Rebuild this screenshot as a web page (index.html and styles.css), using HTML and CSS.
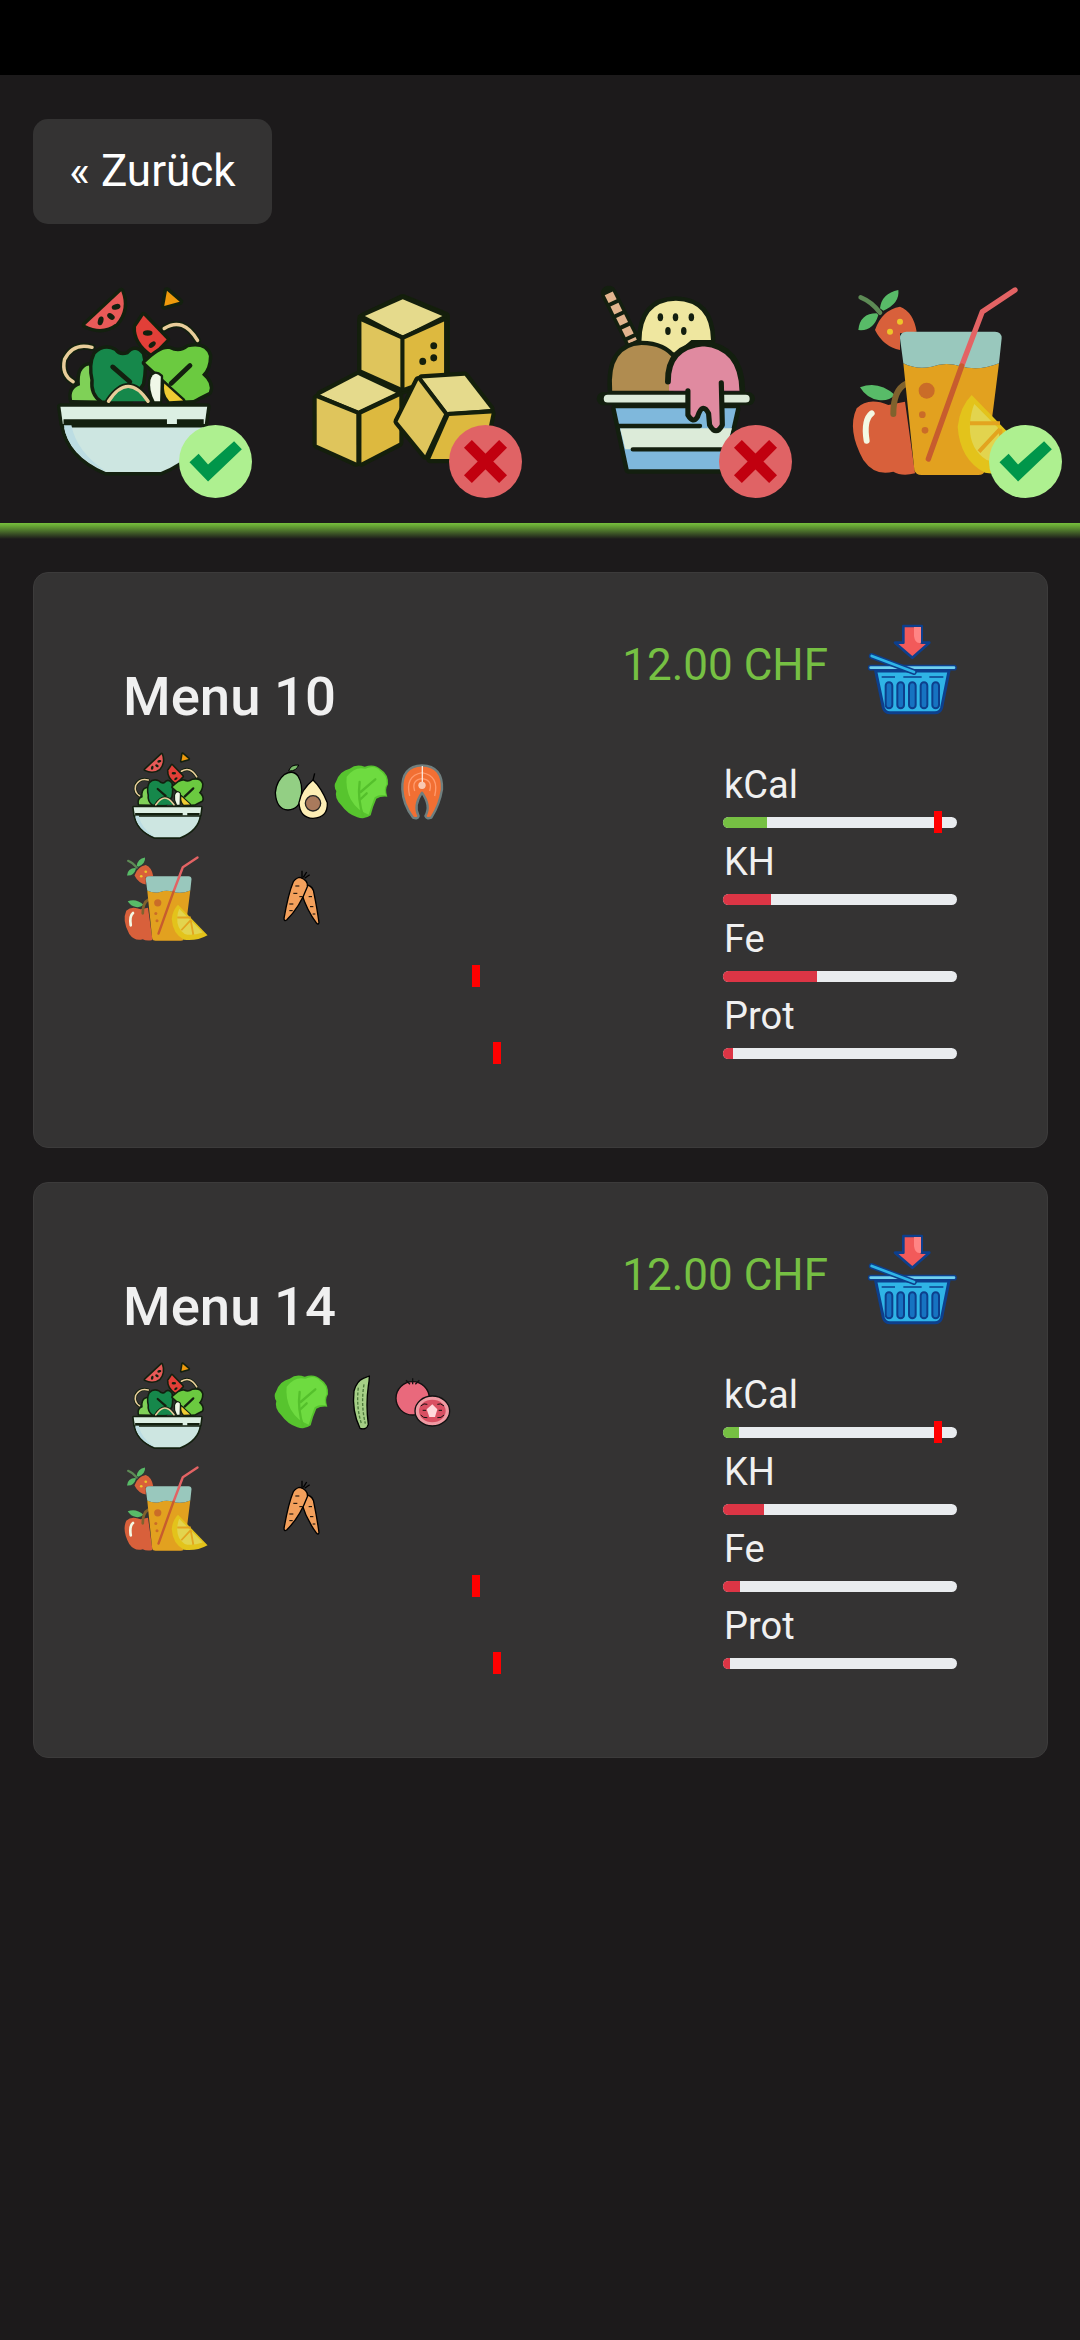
FILE: index.html
```html
<!DOCTYPE html>
<html lang="de">
<head>
    <meta charset="UTF-8">
    <title>Menu</title>
    <link rel="stylesheet" href="styles.css">
</head>
<body>
<svg class="defs" width="0" height="0">
    <defs>
        <symbol id="i-salad" viewBox="-36 9 582 582">
            <g stroke="#13200f" stroke-width="20" stroke-linejoin="round" stroke-linecap="round" paint-order="stroke">
                <path d="M110 140 L215 42 Q235 95 200 135 Q160 165 110 140Z" fill="#e85a58"/>
                <path d="M348 40 L385 72 L340 85Z" fill="#ee9a0c"/>
                <path d="M280 112 L347 182 L305 225 Q255 190 258 145Z" fill="#e23f38"/>
                <path d="M340 150 Q395 115 437 185" fill="none"/>
                <path d="M130 205 Q75 190 50 240 Q40 285 75 305" fill="none"/>
                <path d="M72 358 Q65 325 95 315 Q90 265 120 258 Q150 290 160 360Z" fill="#7fd157"/>
                <path d="M135 300 Q125 255 140 225 Q165 200 195 215 Q210 235 235 225 Q255 200 275 225 Q285 260 275 310 L240 360 H160 Q130 340 135 300Z" fill="#16884b"/>
                <path d="M285 250 Q330 205 355 210 Q385 225 410 205 Q460 195 470 230 Q470 265 450 285 Q480 310 470 335 Q440 350 425 358 L395 360 L340 300Z" fill="#6bca40"/>
                <path d="M190 262 L240 305 M415 258 L360 310" fill="none" stroke-width="14"/>
                <path d="M300 300 Q310 270 330 290 L328 362 L312 362 Q295 330 300 300Z" fill="#f0f8e8" stroke-width="14"/>
                <path d="M340 310 L395 360 L355 362 Q335 340 340 310Z" fill="#eecb33" stroke-width="14"/>
                <path d="M178 362 Q235 275 293 362" fill="#16884b"/>
                <path d="M47 430 H455 Q445 520 330 568 H170 Q60 520 47 430Z" fill="#cde6e1"/>
                <path d="M38 378 H465 L458 428 H45Z" fill="#dcefe3"/>
            </g>
            <g fill="none" stroke-linecap="round">
                <path d="M340 150 Q395 115 437 185 M130 205 Q75 190 50 240 Q40 285 75 305 M178 362 Q235 275 293 362" stroke="#e8cd9a" stroke-width="10"/>
                <path d="M47 422 H348 M377 422 H455" stroke="#13200f" stroke-width="15" stroke-linecap="butt"/>
            </g>
            <path d="M48 432 H70 Q85 510 170 566 Q60 520 48 432Z" fill="#bcdde3"/>
            <g fill="#13200f">
                <ellipse cx="200" cy="87" rx="13" ry="8" transform="rotate(-15 200 87)"/>
                <ellipse cx="185" cy="115" rx="12" ry="8" transform="rotate(35 185 115)"/>
                <ellipse cx="155" cy="128" rx="8" ry="13" transform="rotate(15 155 128)"/>
                <ellipse cx="292" cy="163" rx="14" ry="8"/>
                <ellipse cx="305" cy="197" rx="12" ry="7" transform="rotate(-40 305 197)"/>
            </g>
        </symbol>

        <symbol id="i-juice" viewBox="0 0 600 600">
            <path d="M90 150 Q110 90 165 80 Q205 95 215 155 L165 160 L165 210 Q115 200 90 150Z" fill="#d8603b"/>
            <circle cx="165" cy="125" r="9" fill="#edc52a"/>
            <circle cx="135" cy="155" r="9" fill="#edc52a"/>
            <path d="M105 85 Q110 40 160 30 Q165 70 115 92Z M95 100 Q45 100 40 150 Q85 155 100 105Z" fill="#58bb68"/>
            <path d="M47 52 Q80 65 105 98" fill="none" stroke="#5d8a55" stroke-width="14" stroke-linecap="round"/>
            <path d="M130 375 Q70 350 35 385 Q5 450 55 540 Q90 590 145 575 Q170 590 210 580 L180 365Z" fill="#d8603b"/>
            <path d="M80 400 Q55 420 65 482" fill="none" stroke="#f3f8e3" stroke-width="18" stroke-linecap="round"/>
            <path d="M45 322 Q100 300 150 345 Q130 365 100 360 Q65 355 45 322Z" fill="#58bb68"/>
            <path d="M145 402 Q145 330 182 312" fill="none" stroke="#80622d" stroke-width="18" stroke-linecap="round"/>
            <path d="M175 250 Q215 270 260 260 Q300 245 345 258 Q400 275 462 250 L445 385 L420 570 Q418 585 400 585 H230 Q212 585 208 570Z" fill="#e2a11f"/>
            <path d="M165 175 Q165 155 185 155 H450 Q470 155 470 175 L462 250 Q400 275 345 258 Q300 245 260 260 Q215 270 175 250Z" fill="#99c8bd"/>
            <circle cx="245" cy="332" r="24" fill="#ca6c28"/>
            <circle cx="232" cy="404" r="10" fill="#ca6c28"/>
            <circle cx="240" cy="451" r="10" fill="#ca6c28"/>
            <path d="M510 30 L412 95 L350 258" fill="none" stroke="#e36364" stroke-width="16" stroke-linecap="round" stroke-linejoin="round"/>
            <path d="M350 258 L250 537" fill="none" stroke="#c75c2e" stroke-width="16" stroke-linecap="round"/>
            <path d="M380 345 L577 548 Q500 590 420 578 Q345 540 338 440 Q345 380 380 345Z" fill="#e3c31b"/>
            <path d="M388 372 L545 530 Q470 555 425 540 Q370 505 375 430 Q378 395 388 372Z" fill="#e2d44e"/>
            <path d="M375 430 H465 M402 515 L465 447 M465 447 L482 545" fill="none" stroke="#e3a41f" stroke-width="12"/>
        </symbol>

        <symbol id="i-tofu" viewBox="886 784 581 560" preserveAspectRatio="none">
            <g stroke="#141f0c" stroke-width="24" stroke-linejoin="round" paint-order="stroke">
                <path d="M1050 890 L1170 835 L1295 885 L1295 1045 L1165 1095 L1050 1035Z" fill="#141f0c"/>
                <path d="M1060 885 L1170 838 L1285 885 L1170 940Z" fill="#e5da8c"/>
                <path d="M1050 900 L1165 950 L1165 1085 L1050 1035Z" fill="#dfc55c"/>
                <path d="M1175 950 L1290 900 L1290 1045 L1175 1085Z" fill="#ddb93f"/>
                <path d="M930 1105 L1040 1050 L1150 1100 L1040 1150Z" fill="#e5da8c"/>
                <path d="M920 1115 L1035 1160 L1035 1295 L920 1245Z" fill="#dfc55c"/>
                <path d="M1050 1160 L1160 1110 L1160 1240 L1050 1295Z" fill="#ddb93f"/>
                <path d="M1225 1060 L1350 1052 L1425 1145 L1300 1155Z" fill="#e5da8c"/>
                <path d="M1305 1165 L1428 1158 L1400 1285 L1250 1285Z" fill="#ddb93f"/>
                <path d="M1215 1065 L1290 1160 L1235 1275 L1155 1180Z" fill="#dfc55c"/>
            </g>
            <g fill="#141f0c">
                <circle cx="1260" cy="968" r="10"/>
                <circle cx="1260" cy="1002" r="10"/>
                <circle cx="1228" cy="1012" r="10"/>
            </g>
        </symbol>

        <symbol id="i-icecream" viewBox="102 60 581 600" preserveAspectRatio="none">
            <path d="M200 100 L270 245" stroke="#131f0f" stroke-width="46" stroke-linecap="round"/>
            <path d="M200 100 L270 245" stroke="#e2b48e" stroke-width="26" stroke-dasharray="26 12"/>
            <g stroke="#131f0f" stroke-width="26" stroke-linejoin="round" paint-order="stroke">
                <path d="M295 245 Q295 125 395 122 Q495 125 497 240 L440 240 L395 280Z" fill="#efe7a0"/>
                <path d="M210 392 Q200 260 295 255 Q360 255 390 300 L375 392Z" fill="#b08c50"/>
                <path d="M220 445 H570 L530 628 H258Z" fill="#7fb8dc"/>
            </g>
            <path d="M233 505 H558 L540 568 H248Z" fill="#dcebd9"/>
            <path d="M228 498 H465 M270 568 H530" stroke="#131f0f" stroke-width="13" stroke-linecap="round"/>
            <path d="M185 416 H605" stroke="#131f0f" stroke-width="40" stroke-linecap="round"/>
            <path d="M197 416 H598" stroke="#dcebd9" stroke-width="23" stroke-linecap="round"/>
            <path d="M375 392 Q370 260 475 255 Q580 265 582 392 L532 392 L530 490 Q512 530 495 490 L493 460 Q470 420 455 470 Q445 490 430 470 L430 392Z" fill="#e08aa0"/>
            <path d="M372 365 Q370 260 475 250 Q585 260 588 390" fill="none" stroke="#131f0f" stroke-width="17" stroke-linecap="round"/>
            <path d="M430 392 L430 465 Q445 492 458 470 Q472 425 490 460 L493 495 Q512 530 530 495 L527 368" fill="none" stroke="#131f0f" stroke-width="15" stroke-linecap="round" stroke-linejoin="round"/>
            <g fill="#131f0f">
                <ellipse cx="350" cy="172" rx="8" ry="12"/>
                <ellipse cx="394" cy="172" rx="8" ry="12"/>
                <ellipse cx="440" cy="172" rx="8" ry="12"/>
                <ellipse cx="372" cy="213" rx="8" ry="12"/>
                <ellipse cx="418" cy="213" rx="8" ry="12"/>
            </g>
        </symbol>

        <symbol id="i-basket" viewBox="81 30 270 285">
            <path d="M190 45 H245 V95 H268 L217 140 L165 95 H190Z" fill="#f25a5a" stroke="#0d3f8c" stroke-width="8" stroke-linejoin="round"/>
            <path d="M222 48 H243 V95 Q225 100 222 75Z" fill="#ff8585"/>
            <path d="M107 180 H327 L305 290 Q300 305 285 305 H150 Q135 305 130 290Z" fill="#2fb4e6" stroke="#0d3f8c" stroke-width="9" stroke-linejoin="round"/>
            <g fill="#1673c1" stroke="#0d3f8c" stroke-width="6">
                <rect x="137" y="214" width="20" height="78" rx="10"/>
                <rect x="172" y="214" width="20" height="78" rx="10"/>
                <rect x="207" y="214" width="20" height="78" rx="10"/>
                <rect x="242" y="214" width="20" height="78" rx="10"/>
                <rect x="277" y="214" width="20" height="78" rx="10"/>
            </g>
            <path d="M125 198 H165 M190 198 H245 M268 198 H310" stroke="#0d3f8c" stroke-width="5"/>
            <path d="M92 170 H342" stroke="#0d3f8c" stroke-width="17" stroke-linecap="round"/>
            <path d="M92 170 H342" stroke="#6fd0ee" stroke-width="8" stroke-linecap="round"/>
            <path d="M95 135 L222 183" stroke="#0d3f8c" stroke-width="17" stroke-linecap="round"/>
            <path d="M95 135 L222 183" stroke="#2fb4e6" stroke-width="8" stroke-linecap="round"/>
        </symbol>

        <symbol id="i-avocado" viewBox="12 15 180 180">
            <path d="M50 55 Q75 40 90 60 Q105 85 100 120 Q95 160 60 162 Q25 160 22 110 Q25 75 50 55Z" fill="#93cf84" stroke="#000" stroke-width="4"/>
            <path d="M62 45 Q68 25 92 27 Q85 45 65 45Z" fill="#79b96a" stroke="#000" stroke-width="3"/>
            <path d="M135 72 Q160 95 178 140 Q180 185 135 187 Q95 185 93 140 Q100 100 135 72Z" fill="#fdeeb5" stroke="#000" stroke-width="4"/>
            <path d="M135 72 L140 52" stroke="#000" stroke-width="4"/>
            <circle cx="135" cy="142" r="23" fill="#a97a5c" stroke="#222" stroke-width="4"/>
        </symbol>

        <symbol id="i-lettuce" viewBox="192 15 180 180">
            <path d="M205 75 Q215 45 245 38 Q265 22 290 32 Q320 22 338 40 Q362 55 360 85 Q350 100 358 122 Q338 120 325 128 Q315 150 308 178 Q290 192 268 184 Q238 174 220 148 Q198 125 205 105 Q195 90 205 75Z" fill="#57c42e"/>
            <path d="M236 62 Q260 30 292 38 Q320 26 336 44 Q358 58 356 85 Q346 100 354 118 Q333 114 320 124 Q310 150 302 176 Q268 165 248 130 Q232 95 236 62Z" fill="#6edb40"/>
            <path d="M286 183 Q268 130 275 78 M278 108 L322 70 M275 132 L296 112" fill="none" stroke="#55c02c" stroke-width="7" stroke-linecap="round"/>
        </symbol>

        <symbol id="i-salmon" viewBox="372 15 180 180">
            <path d="M462 28 Q525 30 522 100 Q515 145 490 185 Q475 190 472 180 Q490 150 462 110 Q435 150 452 180 Q450 190 435 185 Q405 145 403 100 Q400 30 462 28Z" fill="#f26f33" stroke="#6f7f7f" stroke-width="7" stroke-linejoin="round"/>
            <path d="M425 120 Q410 60 462 50 Q515 60 500 120 M440 105 Q430 72 462 68 Q495 72 485 105" fill="none" stroke="#ff9a6c" stroke-width="4"/>
            <path d="M463 30 V80" stroke="#f9e5d9" stroke-width="4"/>
            <circle cx="462" cy="88" r="11" fill="#f9c9b2"/>
        </symbol>

        <symbol id="i-carrot" viewBox="516 408 180 180">
            <path d="M622 465 Q640 470 642 490 Q652 540 657 578 Q655 585 650 580 Q620 540 605 490Z" fill="#f3a05c" stroke="#000" stroke-width="4" stroke-linejoin="round"/>
            <path d="M600 442 Q625 450 622 470 Q600 530 560 570 Q552 575 552 565 Q565 490 580 455 Q590 442 600 442Z" fill="#f3a05c" stroke="#000" stroke-width="4" stroke-linejoin="round"/>
            <path d="M606 445 L606 422 M610 442 L620 426 M614 445 L629 434" stroke="#000" stroke-width="4"/>
            <path d="M586 468 H598 M580 490 H592 M598 500 H608 M568 522 H580 M578 542 H568 M636 500 H626 M640 530 H630 M646 552 H638" stroke="#000" stroke-width="3"/>
        </symbol>

        <symbol id="i-cucumber" viewBox="696 90 180 180">
            <path d="M790 112 L808 105 Q808 120 805 135 Q797 190 805 250 Q800 268 780 262 Q755 210 762 150 Q770 120 790 112Z" fill="#a5cf86" stroke="#000" stroke-width="4" stroke-linejoin="round"/>
            <path d="M775 140 Q768 200 785 250 M792 130 Q782 190 796 248" fill="none" stroke="#4d7a3c" stroke-width="4" stroke-dasharray="9 5"/>
        </symbol>

        <symbol id="i-tomato" viewBox="876 90 180 180">
            <circle cx="938" cy="172" r="50" fill="#e9697c" stroke="#111" stroke-width="4"/>
            <path d="M938 130 V112 M930 130 L918 118 M946 130 L958 118" stroke="#111" stroke-width="4"/>
            <ellipse cx="997" cy="210" rx="52" ry="45" fill="#f09aa3" stroke="#111" stroke-width="4"/>
            <ellipse cx="997" cy="210" rx="40" ry="34" fill="#d94f62"/>
            <path d="M997 190 L1012 205 L1005 228 H988 L980 205Z" fill="#ffd8dc"/>
            <path d="M962 195 Q972 185 982 190 M962 222 Q970 232 982 230 M1032 195 Q1022 185 1012 190 M1032 222 Q1024 232 1012 230 M968 208 H978 M1026 208 H1016" fill="none" stroke="#111" stroke-width="3"/>
        </symbol>

        <symbol id="i-ok" viewBox="0 0 216 216">
            <circle cx="108" cy="108" r="108" fill="#aef090"/>
            <path d="M31 110 L58 85 L86 117 L163 48 L186 72 L86 167Z" fill="#00964a"/>
        </symbol>

        <symbol id="i-no" viewBox="0 0 216 216">
            <circle cx="108" cy="108" r="108" fill="#e06365"/>
            <path d="M56 56 L160 160 M160 56 L56 160" stroke="#c1000f" stroke-width="33"/>
        </symbol>
    </defs>
</svg>

<div class="statusbar"></div>

<a class="btn-back">« Zurück</a>

<div class="categories">
    <div class="cat">
        <svg class="cat-icon"><use href="#i-salad"/></svg>
        <svg class="cat-badge"><use href="#i-ok"/></svg>
    </div>
    <div class="cat">
        <svg class="cat-icon"><use href="#i-tofu"/></svg>
        <svg class="cat-badge"><use href="#i-no"/></svg>
    </div>
    <div class="cat">
        <svg class="cat-icon"><use href="#i-icecream"/></svg>
        <svg class="cat-badge"><use href="#i-no"/></svg>
    </div>
    <div class="cat">
        <svg class="cat-icon"><use href="#i-juice"/></svg>
        <svg class="cat-badge"><use href="#i-ok"/></svg>
    </div>
</div>
<div class="divider"></div>

<div class="card">
    <div class="card-head">
        <div class="card-title">Menu 10</div>
        <div class="buy">
            <span class="price">12.00 CHF</span>
            <svg class="basket"><use href="#i-basket"/></svg>
        </div>
    </div>
    <div class="card-body">
        <div class="dishes">
            <div class="dish">
                <svg class="dish-icon"><use href="#i-salad"/></svg>
                <svg class="food"><use href="#i-avocado"/></svg>
                <svg class="food"><use href="#i-lettuce"/></svg>
                <svg class="food"><use href="#i-salmon"/></svg>
            </div>
            <div class="dish">
                <svg class="dish-icon drink"><use href="#i-juice"/></svg>
                <svg class="food"><use href="#i-carrot"/></svg>
            </div>
        </div>
        <div class="nutrition">
            <div class="nut-label">kCal</div>
            <div class="bar">
                <div class="bar-fill ok" style="width: 44px"></div>
                <div class="marker" style="left: 211px"></div>
            </div>
            <div class="nut-label">KH</div>
            <div class="bar">
                <div class="bar-fill" style="width: 48px"></div>
            </div>
            <div class="nut-label">Fe</div>
            <div class="bar">
                <div class="bar-fill" style="width: 94px"></div>
                <div class="marker" style="left: -251px"></div>
            </div>
            <div class="nut-label">Prot</div>
            <div class="bar">
                <div class="bar-fill" style="width: 10px"></div>
                <div class="marker" style="left: -230px"></div>
            </div>
        </div>
    </div>
</div>

<div class="card">
    <div class="card-head">
        <div class="card-title">Menu 14</div>
        <div class="buy">
            <span class="price">12.00 CHF</span>
            <svg class="basket"><use href="#i-basket"/></svg>
        </div>
    </div>
    <div class="card-body">
        <div class="dishes">
            <div class="dish">
                <svg class="dish-icon"><use href="#i-salad"/></svg>
                <svg class="food"><use href="#i-lettuce"/></svg>
                <svg class="food"><use href="#i-cucumber"/></svg>
                <svg class="food"><use href="#i-tomato"/></svg>
            </div>
            <div class="dish">
                <svg class="dish-icon drink"><use href="#i-juice"/></svg>
                <svg class="food"><use href="#i-carrot"/></svg>
            </div>
        </div>
        <div class="nutrition">
            <div class="nut-label">kCal</div>
            <div class="bar">
                <div class="bar-fill ok" style="width: 16px"></div>
                <div class="marker" style="left: 211px"></div>
            </div>
            <div class="nut-label">KH</div>
            <div class="bar">
                <div class="bar-fill" style="width: 41px"></div>
            </div>
            <div class="nut-label">Fe</div>
            <div class="bar">
                <div class="bar-fill" style="width: 17px"></div>
                <div class="marker" style="left: -251px"></div>
            </div>
            <div class="nut-label">Prot</div>
            <div class="bar">
                <div class="bar-fill" style="width: 7px"></div>
                <div class="marker" style="left: -230px"></div>
            </div>
        </div>
    </div>
</div>
</body>
</html>
```

FILE: styles.css
```css
html, body {
    margin: 0;
    padding: 0;
    background-color: #1c1a1b;
    color: #f0f0f0;
    font-family: Roboto, "Liberation Sans", sans-serif;
}

.defs {
    position: absolute;
}

.statusbar {
    height: 75px;
    background-color: #000000;
}

.btn-back {
    display: block;
    box-sizing: border-box;
    width: 239px;
    height: 105px;
    margin: 44px 0 0 33px;
    line-height: 105px;
    text-align: center;
    font-size: 44px;
    color: #ffffff;
    background-color: #343333;
    border-radius: 15px;
}

.categories {
    display: flex;
    margin-top: 56px;
}

.cat {
    position: relative;
    box-sizing: border-box;
    width: 270px;
    height: 243px;
    padding-left: 35px;
}

.cat-icon {
    display: block;
    width: 200px;
    height: 200px;
}

.cat-badge {
    position: absolute;
    right: 18px;
    top: 145px;
    width: 73px;
    height: 73px;
}

.divider {
    height: 16px;
    background: linear-gradient(to bottom, #76bf3e 0, #6aaa36 15%, #1c1a1b 100%);
}

.card {
    box-sizing: border-box;
    width: 1015px;
    height: 576px;
    margin: 33px 0 0 33px;
    padding: 48px 90px 0 86px;
    background-color: #343333;
    border: 1px solid #3c3b3b;
    border-radius: 15px;
}

.card + .card {
    margin-top: 34px;
}

.card-head {
    display: flex;
    justify-content: space-between;
}

.card-title {
    align-self: flex-end;
    margin: 0 0 -7px 3px;
    font-size: 54.5px;
    font-weight: 500;
    line-height: 54px;
    color: #f0f0f0;
}

.buy {
    display: flex;
    align-items: center;
    gap: 39px;
}

.price {
    margin-bottom: 7px;
    font-size: 44px;
    color: #76c043;
}

.basket {
    display: block;
    width: 90px;
    height: 95px;
}

.card-body {
    display: flex;
    justify-content: space-between;
    margin-top: 32px;
}

.dish {
    display: flex;
    align-items: flex-start;
    height: 105px;
}

.dish-icon {
    width: 92px;
    height: 92px;
    margin: 1px 58px 0 2px;
}

.dish-icon.drink {
    width: 90px;
    height: 90px;
    margin: 0 61px 0 1px;
}

.food {
    width: 60px;
    height: 60px;
    margin-top: 13px;
}

.nutrition {
    width: 234px;
    margin-top: 15px;
}

.nut-label {
    margin-left: 1px;
    font-size: 38px;
    line-height: 44px;
    color: #f0f0f0;
}

.bar {
    position: relative;
    height: 11px;
    margin: 10px 0 12px;
    background-color: #e9ecef;
    border-radius: 6px;
}

.bar-fill {
    height: 100%;
    background-color: #dc3545;
    border-radius: 6px 0 0 6px;
}

.bar-fill.ok {
    background-color: #76c043;
}

.marker {
    position: absolute;
    top: -6px;
    width: 8px;
    height: 22px;
    background-color: #ff0000;
}
```
